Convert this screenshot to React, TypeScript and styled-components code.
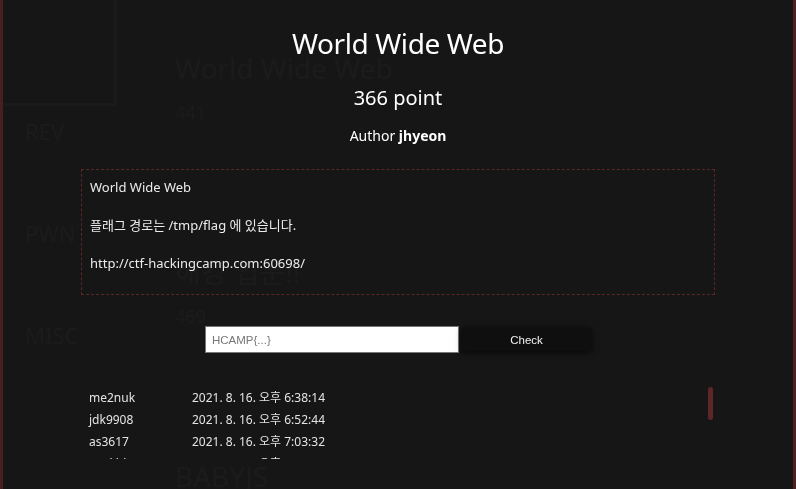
import styled, { createGlobalStyle } from 'styled-components';

const GlobalStyle = createGlobalStyle`
  html, body {
    margin: 0;
    padding: 0;
    background: #161616;
    height: 100%;
    overflow: hidden;
  }
  * {
    box-sizing: border-box;
  }
`;

const KR_FONT = `"Noto Sans", "Noto Sans CJK KR", sans-serif`;

interface Solver {
  name: string;
  time: string;
}

const solvers: Solver[] = [
  { name: 'me2nuk', time: '2021. 8. 16. 오후 6:38:14' },
  { name: 'jdk9908', time: '2021. 8. 16. 오후 6:52:44' },
  { name: 'as3617', time: '2021. 8. 16. 오후 7:03:32' },
  { name: 'B4ckbb', time: '2021. 8. 16. 오후 8:24:30' },
  { name: 'kimjw0730', time: '2021. 8. 16. 오후 9:11:05' },
  { name: 'lsh2035', time: '2021. 8. 16. 오후 10:47:19' },
  { name: 'hyunmin', time: '2021. 8. 17. 오전 1:02:58' },
];

const challenges = [
  { title: 'World Wide Web', point: 441 },
  { title: '해킹 입문!!', point: 469 },
  { title: 'BABYJS', point: 500 },
];

const categories = ['REV', 'PWN', 'MISC'];

export default function App() {
  return (
    <>
      <GlobalStyle />
      <Page>
        <Sidebar>
          <LogoBox />
          {categories.map((c) => (
            <Category key={c}>{c}</Category>
          ))}
        </Sidebar>
        <Main>
          {challenges.map((c) => (
            <Card key={c.title}>
              <CardTitle>{c.title}</CardTitle>
              <CardPoint>{c.point}</CardPoint>
            </Card>
          ))}
        </Main>
      </Page>

      <Modal>
        <Content>
          <Title>World Wide Web</Title>
          <Point>366 point</Point>
          <Author>
            Author <b>jhyeon</b>
          </Author>

          <Description>
            {'World Wide Web\n\n플래그 경로는 /tmp/flag 에 있습니다.\n\nhttp://ctf-hackingcamp.com:60698/\n'}
          </Description>

          <FlagForm onSubmit={(e) => e.preventDefault()}>
            <FlagInput placeholder='HCAMP{...}' />
            <CheckButton type='submit'>Check</CheckButton>
          </FlagForm>

          <SolverBox>
            <SolverList>
              {solvers.map((s) => (
                <SolverRow key={s.name}>
                  <SolverName>{s.name}</SolverName>
                  <SolverTime>{s.time}</SolverTime>
                </SolverRow>
              ))}
            </SolverList>
            <ScrollThumb />
          </SolverBox>
        </Content>
      </Modal>
    </>
  );
}

/* page behind the modal */

const Page = styled.div`
  display: flex;
  height: 100vh;
  overflow: hidden;
  font-family: ${KR_FONT};
  color: #8a8a8a;
`;

const Sidebar = styled.aside`
  width: 175px;
  flex-shrink: 0;
  display: flex;
  flex-direction: column;
`;

const LogoBox = styled.div`
  flex-shrink: 0;
  width: 117px;
  height: 116px;
  margin-top: -10px;
  border: 3px solid #7a7a7a;
`;

const Category = styled.div`
  flex-shrink: 0;
  height: 102px;
  padding: 10px 0 0 25px;
  font-size: 22px;
  line-height: 30px;
`;

const Main = styled.main`
  display: flex;
  flex-direction: column;
  padding-top: 48px;
`;

const Card = styled.div`
  flex-shrink: 0;
  height: 204px;
`;

const CardTitle = styled.div`
  font-size: 28px;
  line-height: 40px;
`;

const CardPoint = styled.div`
  margin-top: 12px;
  font-size: 18px;
  line-height: 24px;
`;

/* modal */

const Modal = styled.div`
  position: fixed;
  inset: 0;
  background: rgba(22, 22, 22, 0.955);
  border-left: 3px solid #45201f;
  border-right: 3px solid #4e2221;
  font-family: ${KR_FONT};
  color: #ffffff;
  overflow: hidden;
`;

const Content = styled.div`
  width: 634px;
  margin: 0 auto;
  padding-top: 26px;
  display: flex;
  flex-direction: column;
  align-items: center;
`;

const Title = styled.h1`
  margin: 0;
  font-size: 28px;
  font-weight: 400;
  line-height: 34px;
  letter-spacing: -0.4px;
`;

const Point = styled.div`
  margin-top: 26px;
  font-size: 20px;
  line-height: 24px;
`;

const Author = styled.div`
  margin-top: 17px;
  font-size: 14px;
  line-height: 17px;
  b {
    font-weight: 700;
  }
`;

const Description = styled.div`
  align-self: stretch;
  margin-top: 25px;
  height: 126px;
  padding: 8px 8px 0;
  border: 1px dashed #5c2626;
  font-size: 13px;
  line-height: 19px;
  color: #ececec;
  white-space: pre-wrap;
`;

const FlagForm = styled.form`
  display: flex;
  align-items: center;
  gap: 3px;
  margin-top: 31px;
`;

const FlagInput = styled.input`
  width: 254px;
  height: 27px;
  padding: 0 6px;
  border: 1px solid #767676;
  background: #ffffff;
  font-family: 'Liberation Sans', Arial, sans-serif;
  font-size: 11.5px;
  color: #222;
  outline: none;
  &::placeholder {
    color: #777;
  }
`;

const CheckButton = styled.button`
  width: 129px;
  height: 23px;
  border: none;
  background: #0f0f0f;
  box-shadow: 0 1px 6px rgba(0, 0, 0, 0.7);
  color: #f2f2f2;
  font-family: 'Liberation Sans', Arial, sans-serif;
  font-size: 11.5px;
  cursor: pointer;
`;

const SolverBox = styled.div`
  position: relative;
  align-self: stretch;
  margin-top: 33px;
`;

const SolverList = styled.div`
  height: 73px;
  overflow-y: hidden;
`;

const ScrollThumb = styled.div`
  position: absolute;
  top: 1px;
  right: 2px;
  width: 5px;
  height: 33px;
  border-radius: 3px;
  background: #5e2626;
`;

const SolverRow = styled.div`
  display: flex;
  padding-left: 8px;
  height: 22px;
  align-items: center;
  font-size: 12px;
  color: #e4e4e4;
`;

const SolverName = styled.span`
  width: 103px;
`;

const SolverTime = styled.span``;
